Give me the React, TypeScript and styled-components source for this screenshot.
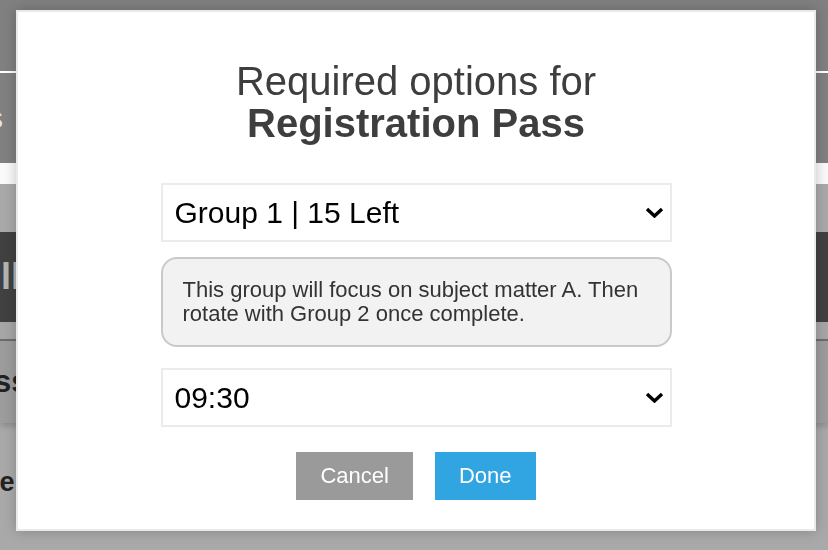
import React from 'react'
import styled, { createGlobalStyle } from 'styled-components'

const GlobalStyle = createGlobalStyle`
    html, body {
        margin: 0;
        padding: 0;
    }
    body {
        background: #a9a9a9;
        font-family: "Liberation Sans", Arial, Helvetica, sans-serif;
    }
`

/* dimmed page behind the dialog */
const Page = styled.div`
    min-height: 550px;
    background: #a9a9a9;
    overflow: hidden;
`

const TopBar = styled.div`
    height: 71px;
    background: #808080;
    border-bottom: 2px solid #ffffff;
`

const NavBar = styled.nav`
    height: 90px;
    background: #808080;
    display: flex;
    align-items: center;
`

const NavLabel = styled.span`
    margin-left: -12px;
    font-size: 30px;
    color: #e4e4e4;
`

const WhiteStrip = styled.div`
    height: 21px;
    background: #fafafa;
`

const SubNav = styled.div`
    height: 48px;
    background: #a9a9a9;
`

const Hero = styled.div`
    height: 90px;
    background: #414141;
    display: flex;
    align-items: center;
    overflow: hidden;
`

const HeroText = styled.span`
    margin-left: 1px;
    font-size: 36px;
    font-weight: 700;
    color: #b4b4b4;
`

const HeroFoot = styled.div`
    height: 17px;
    background: #a6a6a6;
    border-bottom: 2px solid #6e6e6e;
`

const TitleRow = styled.div`
    height: 82px;
    background: #9c9c9c;
    display: flex;
    align-items: center;
    box-shadow: 0 3px 6px rgba(0, 0, 0, 0.18);
    position: relative;
`

const TitleText = styled.span`
    margin-left: -44px;
    font-size: 31px;
    font-weight: 700;
    color: #222;
`

const Body = styled.div`
    padding-top: 44px;
`

const BodyText = styled.span`
    display: block;
    margin-left: -44px;
    font-size: 27px;
    font-weight: 700;
    color: #222;
`

/* dialog */
const Modal = styled.div`
    position: fixed;
    top: 10px;
    left: 16px;
    width: 800px;
    box-sizing: border-box;
    background: #ffffff;
    border: 2px solid #e9e9e9;
    box-shadow: 0 0 12px rgba(0, 0, 0, 0.22);
    padding: 48px 0 29px;
    display: flex;
    flex-direction: column;
    align-items: center;
`

const Heading = styled.h2`
    margin: 0;
    font-size: 40px;
    line-height: 42px;
    font-weight: 400;
    color: #3e3e3e;
    text-align: center;

    strong {
        display: block;
        font-weight: 700;
    }
`

const Form = styled.form`
    width: 511px;
    margin-top: 39px;
    display: flex;
    flex-direction: column;
`

const SelectWrap = styled.div<{ $gap?: number }>`
    position: relative;
    margin-top: ${p => p.$gap ?? 0}px;
`

const Select = styled.select`
    appearance: none;
    -webkit-appearance: none;
    width: 100%;
    height: 59px;
    box-sizing: border-box;
    margin: 0;
    padding: 0 44px 0 12px;
    border: 2px solid #ebebeb;
    border-radius: 0;
    background: #ffffff;
    font-family: inherit;
    font-size: 30px;
    color: #000;
    outline: none;
`

const Chevron = styled.svg`
    position: absolute;
    right: 8px;
    top: 50%;
    margin-top: -6px;
    width: 19px;
    height: 11px;
    pointer-events: none;
`

const Note = styled.p`
    margin: 15px 0 0;
    padding: 19px 18px 19px 20px;
    border: 2px solid #c9c9c9;
    border-radius: 16px;
    background: #f2f2f2;
    font-size: 22px;
    line-height: 24px;
    color: #333;
`

const Actions = styled.div`
    margin-top: 25px;
    display: flex;
    justify-content: center;
    gap: 22px;
`

const Button = styled.button<{ $primary?: boolean }>`
    height: 48px;
    padding: 0 24px;
    border: none;
    border-radius: 0;
    background: ${p => (p.$primary ? '#30a5e1' : '#9a9a9a')};
    color: #ffffff;
    font-family: inherit;
    font-size: 22px;
    cursor: pointer;
`

const ChevronDown = () => (
    <Chevron viewBox="0 0 19 11">
        <polyline points="2,2 9.5,9 17,2" fill="none" stroke="#000" strokeWidth="3.4" strokeLinejoin="miter" />
    </Chevron>
)

const App: React.FC = () => {
    return (
        <>
            <GlobalStyle />
            <Page>
                <TopBar />
                <NavBar>
                    <NavLabel>s</NavLabel>
                </NavBar>
                <WhiteStrip />
                <SubNav />
                <Hero>
                    <HeroText>ll</HeroText>
                </Hero>
                <HeroFoot />
                <TitleRow>
                    <TitleText>Pass</TitleText>
                </TitleRow>
                <Body>
                    <BodyText>Date</BodyText>
                </Body>
            </Page>

            <Modal role="dialog">
                <Heading>
                    Required options for
                    <strong>Registration Pass</strong>
                </Heading>
                <Form onSubmit={e => e.preventDefault()}>
                    <SelectWrap>
                        <Select defaultValue="g1">
                            <option value="g1">Group 1 | 15 Left</option>
                            <option value="g2">Group 2 | 12 Left</option>
                        </Select>
                        <ChevronDown />
                    </SelectWrap>
                    <Note>
                        This group will focus on subject matter A. Then rotate with Group 2 once complete.
                    </Note>
                    <SelectWrap $gap={21}>
                        <Select defaultValue="0930">
                            <option value="0930">09:30</option>
                            <option value="1030">10:30</option>
                        </Select>
                        <ChevronDown />
                    </SelectWrap>
                    <Actions>
                        <Button type="button">Cancel</Button>
                        <Button type="button" $primary>Done</Button>
                    </Actions>
                </Form>
            </Modal>
        </>
    )
}

export default App
